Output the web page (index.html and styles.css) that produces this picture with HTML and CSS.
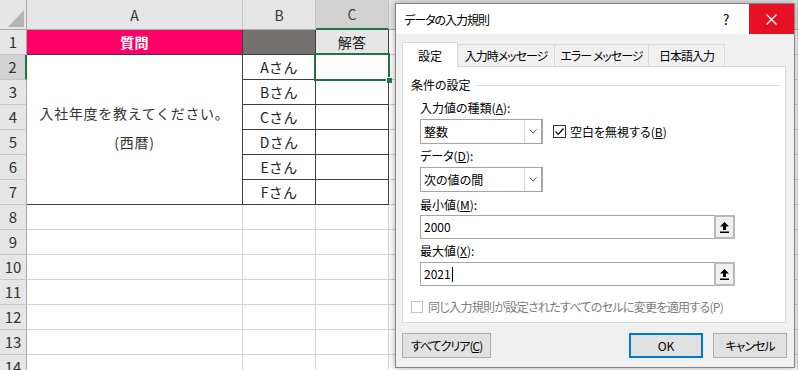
FILE: index.html
```html
<!DOCTYPE html>
<html lang="ja">
<head>
    <meta charset="UTF-8">
    <title>データの入力規則</title>
    <link rel="stylesheet" href="styles.css">
</head>
<body>
<div class="screen">
    <div class="sheet">
        <div class="corner"><svg width="16" height="17" viewBox="0 0 16 17"><polygon points="16,0 16,17 0,17" fill="#b4b4b4"/></svg></div>
        <div class="colhead">A</div>
        <div class="colhead">B</div>
        <div class="colhead sel">C</div>
        <div class="colhead"></div>

        <div class="rowhead">1</div>
        <div class="tbl q">質問</div>
        <div class="tbl gray"></div>
        <div class="tbl ans">解答</div>
        <div></div>

        <div class="rowhead sel">2</div>
        <div class="tbl merged"><span>入社年度を教えてください。<br>(西暦)</span></div>
        <div class="tbl">Aさん</div>
        <div class="tbl cursor"></div>
        <div></div>

        <div class="rowhead">3</div>
        <div class="tbl">Bさん</div>
        <div class="tbl"></div>
        <div></div>

        <div class="rowhead">4</div>
        <div class="tbl">Cさん</div>
        <div class="tbl"></div>
        <div></div>

        <div class="rowhead">5</div>
        <div class="tbl">Dさん</div>
        <div class="tbl"></div>
        <div></div>

        <div class="rowhead">6</div>
        <div class="tbl">Eさん</div>
        <div class="tbl"></div>
        <div></div>

        <div class="rowhead">7</div>
        <div class="tbl">Fさん</div>
        <div class="tbl"></div>
        <div></div>

        <div class="rowhead">8</div><div></div><div></div><div></div><div></div>
        <div class="rowhead">9</div><div></div><div></div><div></div><div></div>
        <div class="rowhead">10</div><div></div><div></div><div></div><div></div>
        <div class="rowhead">11</div><div></div><div></div><div></div><div></div>
        <div class="rowhead">12</div><div></div><div></div><div></div><div></div>
        <div class="rowhead">13</div><div></div><div></div><div></div><div></div>
        <div class="rowhead">14</div><div></div><div></div><div></div><div></div>
    </div>

    <div class="dialog">
        <div class="titlebar">
            <span class="title">データの入力規則</span>
            <span class="help">?</span>
            <span class="close"><svg width="11" height="11" viewBox="0 0 11 11"><path d="M0.5 0.5 L10.5 10.5 M10.5 0.5 L0.5 10.5" stroke="#fff" stroke-width="1.2"/></svg></span>
        </div>
        <div class="dlg-body">
            <div class="tabs">
                <div class="tab current w1">設定</div>
                <div class="tab w2">入力時メッセージ</div>
                <div class="tab w3">エラー メッセージ</div>
                <div class="tab w4">日本語入力</div>
            </div>
            <div class="panel">
                <div class="group"><span>条件の設定</span><i class="rule"></i></div>
                <div class="form">
                    <div class="lbl first">入力値の種類(<u>A</u>):</div>
                    <div class="row">
                        <div class="combo"><span class="val">整数</span><span class="drop"><svg width="8" height="5" viewBox="0 0 8 5"><path d="M0.5 0.5 L4 4 L7.5 0.5" fill="none" stroke="#555" stroke-width="1"/></svg></span></div>
                        <div class="check"><span class="box"><svg width="11" height="11" viewBox="0 0 11 11"><path d="M1.5 5.5 L4.2 8.3 L9.5 2.5" fill="none" stroke="#000" stroke-width="1.2"/></svg></span>空白を無視する(<u>B</u>)</div>
                    </div>
                    <div class="lbl">データ(<u>D</u>):</div>
                    <div class="combo"><span class="val">次の値の間</span><span class="drop"><svg width="8" height="5" viewBox="0 0 8 5"><path d="M0.5 0.5 L4 4 L7.5 0.5" fill="none" stroke="#555" stroke-width="1"/></svg></span></div>
                    <div class="lbl l3">最小値(<u>M</u>):</div>
                    <div class="field f1"><span class="val">2000</span><span class="refbtn"><svg width="9" height="11" viewBox="0 0 9 11"><polygon points="4.5,0 9,4.5 6,4.5 6,8 3,8 3,4.5 0,4.5" fill="#000"/><rect x="0" y="9.5" width="9" height="1.5" fill="#000"/></svg></span></div>
                    <div class="lbl">最大値(<u>X</u>):</div>
                    <div class="field"><span class="val">2021<i class="caret"></i></span><span class="refbtn"><svg width="9" height="11" viewBox="0 0 9 11"><polygon points="4.5,0 9,4.5 6,4.5 6,8 3,8 3,4.5 0,4.5" fill="#000"/><rect x="0" y="9.5" width="9" height="1.5" fill="#000"/></svg></span></div>
                </div>
                <div class="check off"><span class="box"></span>同じ入力規則が設定されたすべてのセルに変更を適用する(P)</div>
            </div>
            <div class="buttons">
                <button class="btn clear">すべてクリア(<u>C</u>)</button>
                <span class="spacer"></span>
                <button class="btn default">OK</button>
                <button class="btn cancel">キャンセル</button>
            </div>
        </div>
    </div>
</div>
</body>
</html>
```

FILE: styles.css
```css
body {
    margin: 0;
    font-family: "Noto Sans CJK JP", "Noto Sans", sans-serif;
    background-color: #ffffff;
    overflow: hidden;
}
.screen {
    position: relative;
    width: 798px;
    height: 370px;
    overflow: hidden;
}

/* シート */
.sheet {
    display: grid;
    grid-template-columns: 27px 216px 73px 73px 1fr;
    grid-template-rows: 30px repeat(14, 25px);
    font-size: 14px;
    color: #222;
}
.sheet > div {
    box-sizing: border-box;
    border-right: 1px solid #d4d4d4;
    border-bottom: 1px solid #d4d4d4;
    display: flex;
    align-items: center;
    justify-content: center;
    line-height: 16px;
}
.sheet > .corner {
    background-color: #e6e6e6;
    border-right-color: #a9a9a9;
    border-bottom-color: #a9a9a9;
    align-items: flex-end;
    justify-content: flex-end;
    padding: 0 2px 2px 0;
}
.corner svg {
    display: block;
}
.sheet > .colhead {
    background-color: #e6e6e6;
    border-right-color: #c6c6c6;
    border-bottom-color: #a9a9a9;
    color: #333;
}
.sheet > .colhead.sel {
    background-color: #d2d2d2;
    border-bottom: 2px solid #217346;
    color: #1f4e36;
}
.sheet > .rowhead {
    background-color: #e6e6e6;
    border-right-color: #a9a9a9;
    border-bottom-color: #c6c6c6;
    color: #333;
    font-size: 15px;
}
.sheet > .rowhead.sel {
    background-color: #d2d2d2;
    border-right: 2px solid #217346;
}
.sheet > .tbl {
    border-right-color: #3f3f3f;
    border-bottom-color: #3f3f3f;
    letter-spacing: 0.3px;
}
.q {
    background-color: #ff0066;
    color: #ffffff;
    font-weight: bold;
}
.gray {
    background-color: #767171;
}
.ans {
    background-color: #e7e6e6;
}
.sheet > .merged {
    grid-row: span 6;
    text-align: center;
    line-height: 29px;
    letter-spacing: 0.7px;
    padding-bottom: 4px;
    color: #333;
}
.cursor {
    position: relative;
}
.cursor::after {
    content: "";
    position: absolute;
    left: -2px;
    top: -2px;
    right: -2px;
    bottom: -2px;
    border: 2px solid #217346;
}
.cursor::before {
    content: "";
    position: absolute;
    right: -4px;
    bottom: -4px;
    width: 5px;
    height: 5px;
    background-color: #217346;
    border: 1px solid #ffffff;
    border-width: 1px 0 0 1px;
    z-index: 2;
}

/* ダイアログ */
.dialog {
    position: absolute;
    left: 395px;
    top: 3px;
    width: 400px;
    height: 365px;
    box-sizing: border-box;
    border: 1px solid #858585;
    background-color: #f0f0f0;
    box-shadow: 0 0 7px rgba(0, 0, 0, 0.35);
    display: flex;
    flex-direction: column;
    font-size: 12px;
    font-feature-settings: "palt";
    color: #000;
}
.titlebar {
    height: 30px;
    background-color: #ffffff;
    display: flex;
    align-items: center;
}
.title {
    flex: 1;
    padding-left: 8px;
    letter-spacing: -1px;
}
.help {
    width: 20px;
    text-align: center;
    font-size: 14px;
    margin-right: 13px;
}
.close {
    width: 45px;
    height: 30px;
    background-color: #e81123;
    display: flex;
    align-items: center;
    justify-content: center;
}
.close svg {
    display: block;
}
.dlg-body {
    padding: 8px 7px 0 6px;
}
.tabs {
    display: flex;
    height: 24px;
    position: relative;
    z-index: 1;
}
.tab {
    box-sizing: border-box;
    height: 22px;
    margin-top: 2px;
    margin-left: -1px;
    border: 1px solid #d9d9d9;
    border-bottom: none;
    background-color: #f0f0f0;
    display: flex;
    align-items: center;
    justify-content: center;
    letter-spacing: -1px;
}
.tab.current {
    height: 25px;
    margin-top: 0;
    margin-left: 0;
    background-color: #ffffff;
    position: relative;
    z-index: 2;
    letter-spacing: 0;
}
.w1 { width: 56px; }
.w2 { width: 98px; }
.w3 { width: 95px; }
.w4 { width: 77px; }
.panel {
    box-sizing: border-box;
    height: 257px;
    margin-right: 1px;
    background-color: #ffffff;
    border: 1px solid #d9d9d9;
    padding: 10px 0 0 8px;
}
.group {
    display: flex;
    align-items: center;
    height: 16px;
    line-height: 16px;
}
.rule {
    flex: 1;
    height: 1px;
    background-color: #dcdcdc;
    margin: 0 5px 0 5px;
}
.form {
    margin-left: 9px;
}
.lbl {
    height: 16px;
    line-height: 16px;
    margin-top: 4px;
}
.lbl.first {
    margin-top: 7px;
}
.lbl.l3 {
    margin-top: 5px;
}
.row {
    display: flex;
    align-items: center;
}
.combo {
    box-sizing: border-box;
    display: flex;
    width: 123px;
    height: 25px;
    margin-top: 3px;
    border: 1px solid #a5a5a5;
    border-right-width: 2px;
    background-color: #ffffff;
}
.val {
    flex: 1;
    padding-left: 3px;
    line-height: 23px;
    font-size: 12px;
}
.drop {
    width: 16px;
    border-left: 1px solid #d9d9d9;
    display: flex;
    align-items: center;
    justify-content: center;
}
.check {
    display: flex;
    align-items: center;
    height: 16px;
    line-height: 16px;
    margin-left: 10px;
    margin-top: 3px;
}
.box {
    box-sizing: border-box;
    width: 13px;
    height: 13px;
    border: 1px solid #333;
    background-color: #ffffff;
    margin-right: 4px;
    display: flex;
    align-items: center;
    justify-content: center;
}
.check.off {
    margin: 13px 0 0 0;
    color: #7d7d7d;
    letter-spacing: -0.7px;
}
.check.off .box {
    width: 12px;
    height: 12px;
    border-color: #c4c4c4;
    margin-right: 5px;
}
.field {
    box-sizing: border-box;
    display: flex;
    width: 315px;
    height: 24px;
    margin-top: 3px;
    border: 1px solid #a5a5a5;
    background-color: #ffffff;
}
.field.f1 {
    margin-top: 2px;
}
.field .val {
    line-height: 22px;
}
.caret {
    display: inline-block;
    width: 1px;
    height: 15px;
    margin-left: 1px;
    background-color: #000;
    vertical-align: -3px;
}
.refbtn {
    box-sizing: border-box;
    width: 21px;
    margin: -1px -1px -1px 0;
    border: 2px solid #b9b9b9;
    background-color: #f0f0f0;
    display: flex;
    align-items: center;
    justify-content: center;
}
.buttons {
    display: flex;
    margin-top: 10px;
}
.spacer {
    flex: 1;
}
.btn {
    box-sizing: border-box;
    height: 25px;
    padding: 0;
    border: 1px solid #adadad;
    background-color: #e1e1e1;
    font-family: inherit;
    font-size: 12px;
    font-feature-settings: "palt";
    letter-spacing: -1px;
    color: #000;
}
.clear {
    width: 89px;
}
.default {
    width: 74px;
    border: 2px solid #0078d7;
    letter-spacing: 0;
}
.cancel {
    width: 74px;
    margin-left: 10px;
}
```
